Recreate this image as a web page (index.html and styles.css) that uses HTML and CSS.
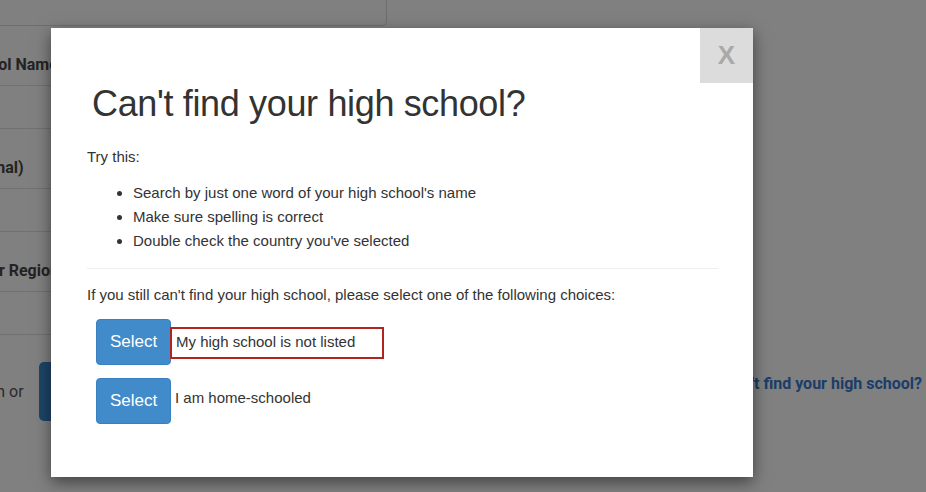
FILE: index.html
```html
<!DOCTYPE html>
<html>
<head>
<meta charset="utf-8">
<link rel="stylesheet" href="styles.css">
</head>
<body>
<div class="page">
  <div class="form-col">
    <div class="top-input"></div>
    <div class="label label-name">School Name</div>
    <div class="input"></div>
    <div class="label label-opt">(Optional)</div>
    <div class="input"></div>
    <div class="label">State or Region</div>
    <div class="input"></div>
    <div class="search-row">
      <span class="search-text">Search or</span>
      <span class="search-btn"></span>
    </div>
  </div>
  <a class="find-link">Can't find your high school?</a>
</div>

<div class="modal">
  <button class="close">X</button>
  <h1 class="title">Can't find your high school?</h1>
  <p class="try">Try this:</p>
  <ul class="tips">
    <li>Search by just one word of your high school's name</li>
    <li>Make sure spelling is correct</li>
    <li>Double check the country you've selected</li>
  </ul>
  <hr class="divider">
  <p class="still">If you still can't find your high school, please select one of the following choices:</p>
  <div class="choices">
    <div class="choice">
      <button class="select">Select</button>
      <span class="choice-label boxed">My high school is not listed</span>
    </div>
    <div class="choice">
      <button class="select">Select</button>
      <span class="choice-label">I am home-schooled</span>
    </div>
  </div>
</div>
</body>
</html>
```

FILE: styles.css
```css
html, body {
  margin: 0;
  padding: 0;
}
body {
  width: 926px;
  height: 492px;
  background: #808080;
  overflow: hidden;
  font-family: "Liberation Sans", Arial, sans-serif;
  position: relative;
}
.page {
  display: flex;
  justify-content: space-between;
  height: 100%;
}
.form-col {
  width: 439px;
  margin-left: -52px;
  display: flex;
  flex-direction: column;
}
.top-input {
  height: 26px;
  border: 1px solid #6e6e6e;
  border-top: none;
  border-radius: 0 0 5px 5px;
  box-sizing: border-box;
}
.label {
  font-family: Roboto, sans-serif;
  font-weight: bold;
  font-size: 16px;
  color: #232323;
  height: 59px;
  line-height: 20px;
  padding-top: 29px;
  box-sizing: border-box;
  white-space: nowrap;
}
.label-name {
  padding-left: 14px;
}
.label-opt {
  padding-left: 4px;
}
.input {
  height: 44px;
  border-top: 1px solid #717171;
  border-bottom: 1px solid #717171;
  box-sizing: border-box;
}
.search-row {
  display: flex;
  align-items: center;
  margin-top: 27px;
  padding-left: 8px;
}
.search-text {
  font-family: Roboto, sans-serif;
  font-size: 16px;
  color: #2a2a2a;
  margin-right: 15px;
  white-space: nowrap;
}
.search-btn {
  width: 100px;
  height: 59px;
  border-radius: 5px;
  background: #1d4568;
}
.find-link {
  font-family: Roboto, sans-serif;
  font-weight: bold;
  font-size: 16px;
  color: #1a3d69;
  align-self: flex-start;
  margin-top: 374px;
  margin-right: 4px;
  white-space: nowrap;
}

.modal {
  position: absolute;
  left: 51px;
  top: 28px;
  width: 702px;
  height: 449px;
  box-sizing: border-box;
  background: #fff;
  box-shadow: 0 5px 15px rgba(0,0,0,0.5);
  padding: 56px 35px 0 36px;
  color: #333;
}
.close {
  position: absolute;
  top: 0;
  right: 0;
  width: 53px;
  height: 55px;
  border: none;
  background: #dcdcdc;
  color: #a9a9a9;
  font-family: "Liberation Sans", Arial, sans-serif;
  font-weight: bold;
  font-size: 26px;
  padding: 0;
}
.title {
  font-weight: normal;
  font-size: 36px;
  line-height: 40px;
  margin: 0 0 0 5px;
  color: #333;
  letter-spacing: -0.35px;
}
.try {
  font-size: 15px;
  margin: 23px 0 0;
  line-height: 20px;
}
.tips {
  margin: 14px 0 0;
  padding-left: 46px;
  font-size: 15px;
  line-height: 24px;
}
.divider {
  border: none;
  border-top: 1px solid #eee;
  margin: 15px 0 0;
}
.still {
  font-size: 15px;
  line-height: 20px;
  margin: 16px 0 0;
}
.choices {
  margin-top: 14px;
  padding-left: 9px;
  display: flex;
  flex-direction: column;
  gap: 13px;
}
.choice {
  display: flex;
  align-items: flex-start;
}
.select {
  width: 75px;
  height: 46px;
  border: 1px solid #3a80c0;
  border-radius: 4px;
  background: #428bca;
  color: #fff;
  font-family: "Liberation Sans", Arial, sans-serif;
  font-size: 17px;
  padding: 0;
}
.choice-label {
  font-size: 15px;
  line-height: 20px;
  padding: 10px 4px;
  color: #333;
}
.choice-label.boxed {
  margin-top: 8px;
  padding: 3px 27px 5px 4px;
  border: 2px solid #b0261e;
  margin-left: -1px;
}
```
